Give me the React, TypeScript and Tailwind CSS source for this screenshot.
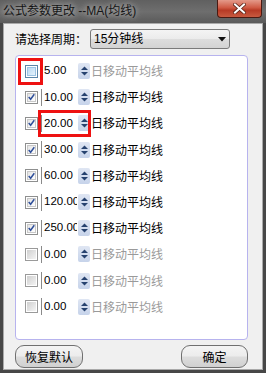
import React from "react";

const CJK = "font-['Noto_Sans_CJK_SC',sans-serif]";
const MIX = "font-['Liberation_Sans','Noto_Sans_CJK_SC',sans-serif]";

type Row = { checked: boolean; value: string; enabled: boolean; hover?: boolean };

const rows: Row[] = [
  { checked: false, value: "5.00", enabled: false, hover: true },
  { checked: true, value: "10.00", enabled: true },
  { checked: true, value: "20.00", enabled: true },
  { checked: true, value: "30.00", enabled: true },
  { checked: true, value: "60.00", enabled: true },
  { checked: true, value: "120.00", enabled: true },
  { checked: true, value: "250.00", enabled: true },
  { checked: false, value: "0.00", enabled: false },
  { checked: false, value: "0.00", enabled: false },
  { checked: false, value: "0.00", enabled: false },
];

function CheckBox({ row }: { row: Row }) {
  if (row.hover) {
    return (
      <div className="w-[13px] h-[13px] border border-[#5b86a8] bg-white p-[1px] shrink-0">
        <div className="w-full h-full bg-[linear-gradient(135deg,#b9d9f2,#e6f3fc)] border border-[#9cc4e4]" />
      </div>
    );
  }
  if (row.checked) {
    return (
      <div className="w-[13px] h-[13px] border border-[#8e8f8f] bg-white p-[1px] shrink-0">
        <div className="w-full h-full border border-[#c8c8c8] bg-[linear-gradient(135deg,#e4e4e4,#ffffff)] flex items-center justify-center">
          <svg width="8" height="8" viewBox="0 0 8 8">
            <path d="M0.8 4 L3 6.6 L7.2 0.8" fill="none" stroke="#2f4f9a" strokeWidth="1.7" />
          </svg>
        </div>
      </div>
    );
  }
  return (
    <div className="w-[13px] h-[13px] border border-[#9a9a9a] bg-white p-[1px] shrink-0">
      <div className="w-full h-full bg-[linear-gradient(135deg,#cfcfcf,#f4f4f4)]" />
    </div>
  );
}

function Spinner() {
  return (
    <div className="w-[12px] h-[16px] ml-[1px] bg-[linear-gradient(180deg,#dfe6f3,#c6d3ea)] rounded-[2px] flex items-center justify-center shrink-0">
      <svg width="9" height="12" viewBox="0 0 9 12">
        <path d="M1 5 L4.5 1.5 L8 5 Z" fill="#26426f" />
        <path d="M1 7 L4.5 10.5 L8 7 Z" fill="#26426f" />
      </svg>
    </div>
  );
}

export default function App() {
  return (
    <div className="relative w-[266px] h-[373px] bg-[#474747] flex flex-col overflow-hidden">
      {/* title bar */}
      <div className="h-[23px] shrink-0 flex items-start justify-between bg-[linear-gradient(180deg,#606060,#6e6e6e_50%,#5a5a5a)]">
        <span
          className={`pl-[3px] pt-[3px] text-[12px] leading-[16px] text-[#151515] whitespace-pre [text-shadow:0_0_5px_#b8b8b8,0_0_8px_#a8a8a8] ${MIX}`}
        >
          公式参数更改 --MA(均线)
        </span>
        <div className="mr-[4px] w-[45px] h-[18px] rounded-b-[4px] border border-t-0 border-[#4a1a12] bg-[linear-gradient(180deg,#e49a8a,#cf5a44_45%,#b73a25_60%,#c85a40)] flex items-center justify-center">
          <svg width="13" height="11" viewBox="0 0 13 11">
            <path d="M2 1.5 L11 9.5 M11 1.5 L2 9.5" stroke="#5a2418" strokeWidth="3.6" strokeLinecap="square" />
            <path d="M2 1.5 L11 9.5 M11 1.5 L2 9.5" stroke="#ffffff" strokeWidth="2" strokeLinecap="square" />
          </svg>
        </div>
      </div>

      {/* client area */}
      <div className="mx-[3px] mb-[3px] flex-1 bg-[#f0f0f0] border border-[#a9a9a9] flex flex-col pt-[5px]">
        <div className="flex items-center h-[20px]">
          <span className={`ml-[11px] text-[12px] text-black ${CJK}`}>请选择周期：</span>
          <div className="ml-[3px] w-[140px] h-[20px] rounded-[3px] border border-[#7a7a7a] bg-[linear-gradient(180deg,#f4f4f4,#ebebeb_50%,#dddddd_51%,#d3d3d3)] flex items-center justify-between">
            <span className={`pl-[3px] text-[12px] text-black ${MIX}`}>15分钟线</span>
            <svg width="8" height="5" viewBox="0 0 8 5" className="mr-[3px]">
              <path d="M0 0 L8 0 L4 4.5 Z" fill="#111" />
            </svg>
          </div>
        </div>

        {/* group box */}
        <div className="mt-[6px] ml-[11px] w-[233px] h-[285px] rounded-[4px] border border-[#b7b3ee] bg-white pt-[2px] pl-[9px] flex flex-col">
          {rows.map((r, i) => (
            <div key={i} className="h-[26.2px] flex items-center shrink-0">
              <CheckBox row={r} />
              <div className="ml-[3px] w-[36px] h-[17px] border-l border-[#8a8a8a] pl-[2px] overflow-hidden whitespace-nowrap flex items-center">
                <span className="font-['Liberation_Sans',sans-serif] text-[11.5px] text-black leading-none">{r.value}</span>
              </div>
              <Spinner />
              <span
                className={`ml-[1px] text-[12px] ${r.enabled ? "text-black" : "text-[#9a9a9a]"} ${CJK}`}
              >
                日移动平均线
              </span>
            </div>
          ))}
        </div>

        {/* buttons */}
        <div className="mt-[5px] flex justify-between pl-[11px] pr-[14px]">
          <button
            className={`w-[68px] h-[23px] rounded-[9px] border border-[#707070] bg-[linear-gradient(180deg,#f4f4f4,#ececec_48%,#dddddd_52%,#d0d0d0)] text-[12px] text-black ${CJK}`}
          >
            恢复默认
          </button>
          <button
            className={`w-[67px] h-[23px] rounded-[9px] border border-[#707070] bg-[linear-gradient(180deg,#f4f4f4,#ececec_48%,#dddddd_52%,#d0d0d0)] text-[12px] text-black ${CJK}`}
          >
            确定
          </button>
        </div>
      </div>

      {/* red highlight overlays */}
      <div className="absolute left-[18px] top-[58px] w-[25px] h-[27px] border-[3px] border-[#ee1111]" />
      <div className="absolute left-[38px] top-[110px] w-[53px] h-[27px] border-[3px] border-[#ee1111]" />
    </div>
  );
}
